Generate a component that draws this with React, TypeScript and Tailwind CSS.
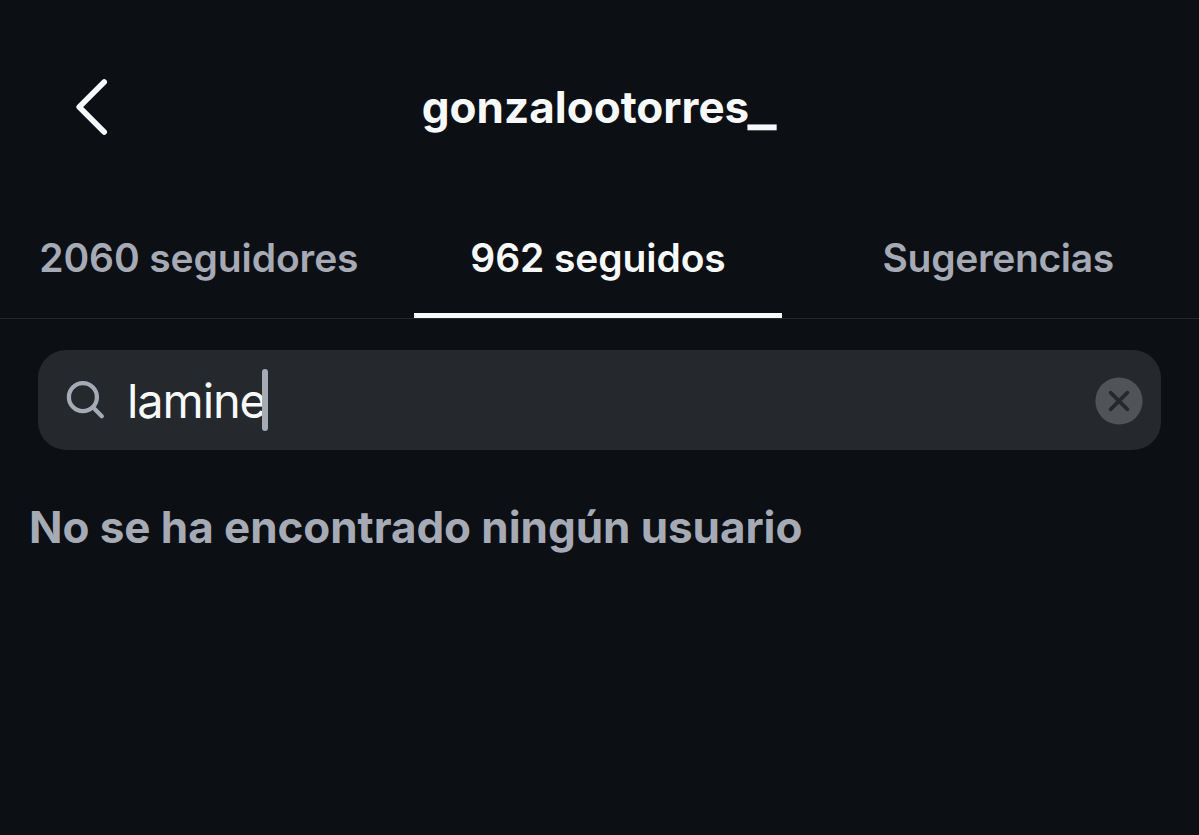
interface Tab {
  id: string;
  label: string;
  labelClass: string;
}

const tabs: Tab[] = [
  { id: 'followers', label: '2060 seguidores', labelClass: 'tracking-[-0.1px] -ml-[2px]' },
  { id: 'following', label: '962 seguidos', labelClass: 'tracking-[-0.1px] -ml-[3px]' },
  { id: 'suggestions', label: 'Sugerencias', labelClass: 'tracking-[-0.35px] -ml-[2px]' },
];

function BackIcon() {
  return (
    <svg width="36" height="60" viewBox="0 0 36 60" fill="none" stroke="currentColor" strokeWidth="5.6" strokeLinecap="round" strokeLinejoin="round">
      <path d="M30.2 5 5.2 30l25 25" />
    </svg>
  );
}

function SearchIcon() {
  return (
    <svg width="40" height="40" viewBox="0 0 40 40" fill="none" stroke="currentColor" strokeWidth="4.3" strokeLinecap="round">
      <circle cx="16.9" cy="17.2" r="14" />
      <path d="M27.2 27.6 35.8 36.3" />
    </svg>
  );
}

function ClearIcon() {
  return (
    <svg width="48" height="48" viewBox="0 0 48 48">
      <circle cx="24" cy="24" r="23.6" fill="#505358" />
      <path d="m15.6 15.6 16.8 16.8M32.4 15.6 15.6 32.4" fill="none" stroke="#25282d" strokeWidth="3.7" strokeLinecap="round" />
    </svg>
  );
}

function Header({ username }: { username: string }) {
  // Trailing underscores are drawn wider than the font's own glyph
  const name = username.replace(/_+$/, '');
  const tail = username.slice(name.length);

  return (
    <header className="grid h-[214px] grid-cols-[150px_1fr_150px] items-center text-[#f8f9fb]">
      <button className="pl-[74px]" aria-label="Atrás">
        <BackIcon />
      </button>
      <h1 className="text-center text-[44px] leading-none font-bold">
        {name}
        <span className="mr-[8px] -ml-px inline-block origin-left translate-y-[2px] scale-x-[1.34] [-webkit-text-stroke:0.8px_#f8f9fb]">{tail}</span>
      </h1>
    </header>
  );
}

function TabBar({ activeId }: { activeId: string }) {
  return (
    <nav className="flex h-[105px] border-b border-[#25282c]">
      {tabs.map((tab) => {
        const isActive = tab.id === activeId;
        return (
          <button key={tab.id} className="flex flex-1 flex-col items-center whitespace-nowrap">
            <span
              className={`flex h-[99px] items-center pb-[13px] text-[39px] leading-none font-semibold ${tab.labelClass} ${
                isActive ? 'text-[#f8f9fb]' : 'text-[#a5aab4]'
              }`}
            >
              {tab.label}
            </span>
            {isActive && <span className="-ml-[3px] h-[5px] w-[368px] bg-[#f8f9fb]" />}
          </button>
        );
      })}
    </nav>
  );
}

function SearchBar({ query }: { query: string }) {
  return (
    <div className="mx-[38px] mt-[31px] flex h-[100px] items-center rounded-[28px] bg-[#25282d] pr-[18px] pl-[28px]">
      <span className="text-[#a5aab4]">
        <SearchIcon />
      </span>
      <span className="ml-[21px] text-[47px] leading-none tracking-[-1.1px] text-[#f8f9fb]">{query}</span>
      <span className="-ml-[4px] h-[62px] w-[6px] rounded-full bg-[#a5aab4]" />
      <button className="ml-auto pt-[2px]" aria-label="Borrar">
        <ClearIcon />
      </button>
    </div>
  );
}

export default function App() {
  return (
    <div className="h-[835px] w-[1199px] overflow-hidden bg-[#0c0f14] font-['Inter',sans-serif]">
      <Header username="gonzalootorres_" />
      <TabBar activeId="following" />
      <SearchBar query="lamine" />
      <p className="mt-[55px] ml-[29px] text-[44px] leading-[44px] font-bold tracking-[-0.06px] whitespace-nowrap text-[#a5aab4]">
        No se ha encontrado ningún usuario
      </p>
    </div>
  );
}
